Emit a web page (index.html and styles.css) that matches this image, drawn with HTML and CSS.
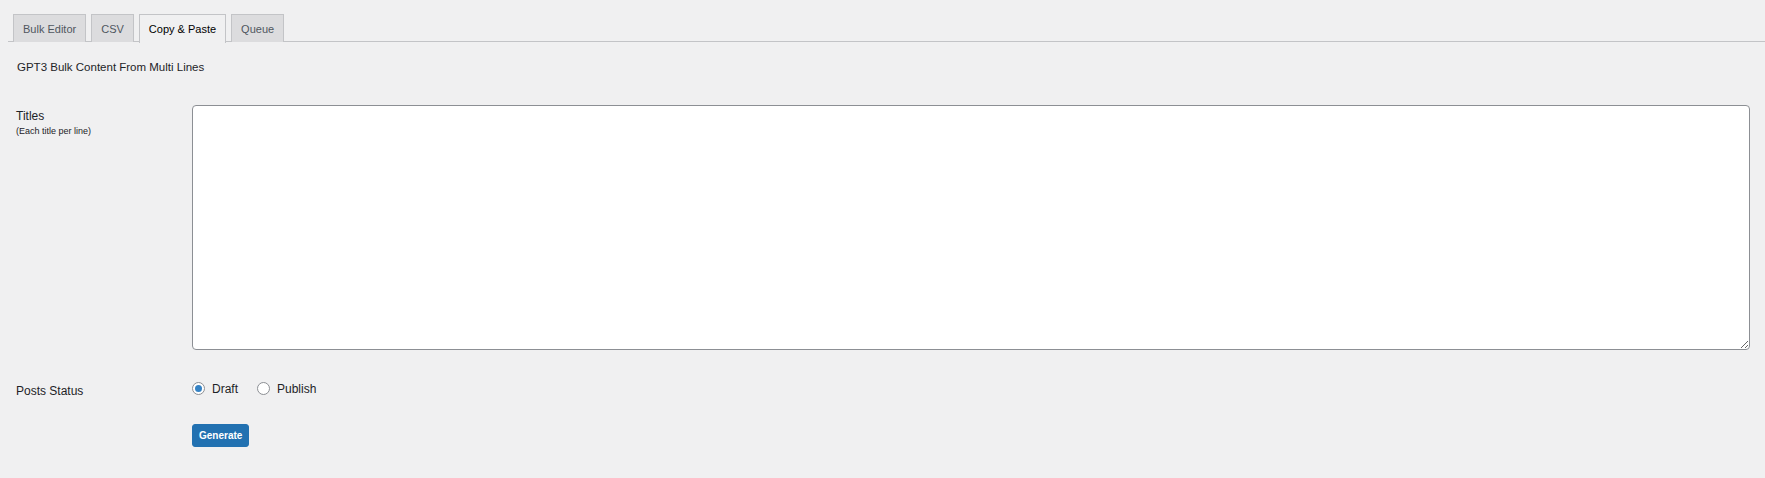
FILE: index.html
```html
<!DOCTYPE html>
<html lang="en">
<head>
    <meta charset="UTF-8">
    <meta name="viewport" content="width=device-width, initial-scale=1.0">
    <title>GPT3 Bulk Content</title>
    <link rel="stylesheet" href="styles.css">
</head>
<body>
    <div class="wrap">
        <nav class="nav-tab-wrapper">
            <a href="#" class="nav-tab">Bulk Editor</a>
            <a href="#" class="nav-tab">CSV</a>
            <a href="#" class="nav-tab nav-tab-active">Copy &amp; Paste</a>
            <a href="#" class="nav-tab">Queue</a>
        </nav>

        <h3 class="section-title">GPT3 Bulk Content From Multi Lines</h3>

        <form class="form-table" onsubmit="return false">
            <div class="label label-titles">
                <span>Titles</span>
                <small>(Each title per line)</small>
            </div>
            <div class="field">
                <textarea class="titles"></textarea>
            </div>

            <div class="label label-status">Posts Status</div>
            <div class="field radios">
                <label><input type="radio" name="status" value="draft" checked> Draft</label>
                <label><input type="radio" name="status" value="publish"> Publish</label>
            </div>

            <div></div>
            <div class="field">
                <button type="submit" class="button-primary">Generate</button>
            </div>
        </form>
    </div>
</body>
</html>
```

FILE: styles.css
```css
body { margin: 0; background: #f0f0f1; color: #1d2327; font-family: "Liberation Sans", Arial, sans-serif; font-size: 12px; }
.wrap { padding: 14px 0 0 8px; }
.nav-tab-wrapper { display: flex; gap: 5px; padding-left: 5px; border-bottom: 1px solid #c3c4c7; height: 27px; }
.nav-tab { display: block; height: 27px; line-height: 28px; padding: 0 9px; background: #dcdcde; border: 1px solid #c3c4c7; border-bottom: none; color: #50575e; text-decoration: none; font-size: 11px; }
.nav-tab-active { background: #f0f0f1; color: #000; height: 28px; }
.section-title { margin: 17px 0 0 9px; font-size: 11.5px; font-weight: normal; line-height: 16px; }
.form-table { display: grid; grid-template-columns: 184px 1fr; margin-top: 30px; padding-right: 15px; }
.label { padding-left: 8px; line-height: 16px; }
.label-titles { padding-top: 3px; }
.label span { display: block; }
.label small { display: block; font-size: 9px; line-height: 14px; }
.titles { display: block; box-sizing: border-box; width: 100%; height: 245px; border: 1px solid #8c8f94; border-radius: 4px; background: #fff; margin: 0; }
.label-status { margin-top: 33px; }
.radios { display: flex; gap: 19px; margin-top: 28px; align-items: center; }
.radios label { display: flex; align-items: center; gap: 7px; }
.radios input { appearance: none; margin: 0; width: 13px; height: 13px; border: 1px solid #8c8f94; border-radius: 50%; background: #fff; display: grid; place-items: center; }
.radios input:checked::before { content: ""; width: 7px; height: 7px; border-radius: 50%; background: #3582c4; }
.button-primary { margin-top: 25px; height: 23px; padding: 0 6px; background: #2271b1; color: #fff; border: 1px solid #2271b1; border-radius: 3px; font-family: inherit; font-size: 10px; font-weight: bold; cursor: pointer; }
```
